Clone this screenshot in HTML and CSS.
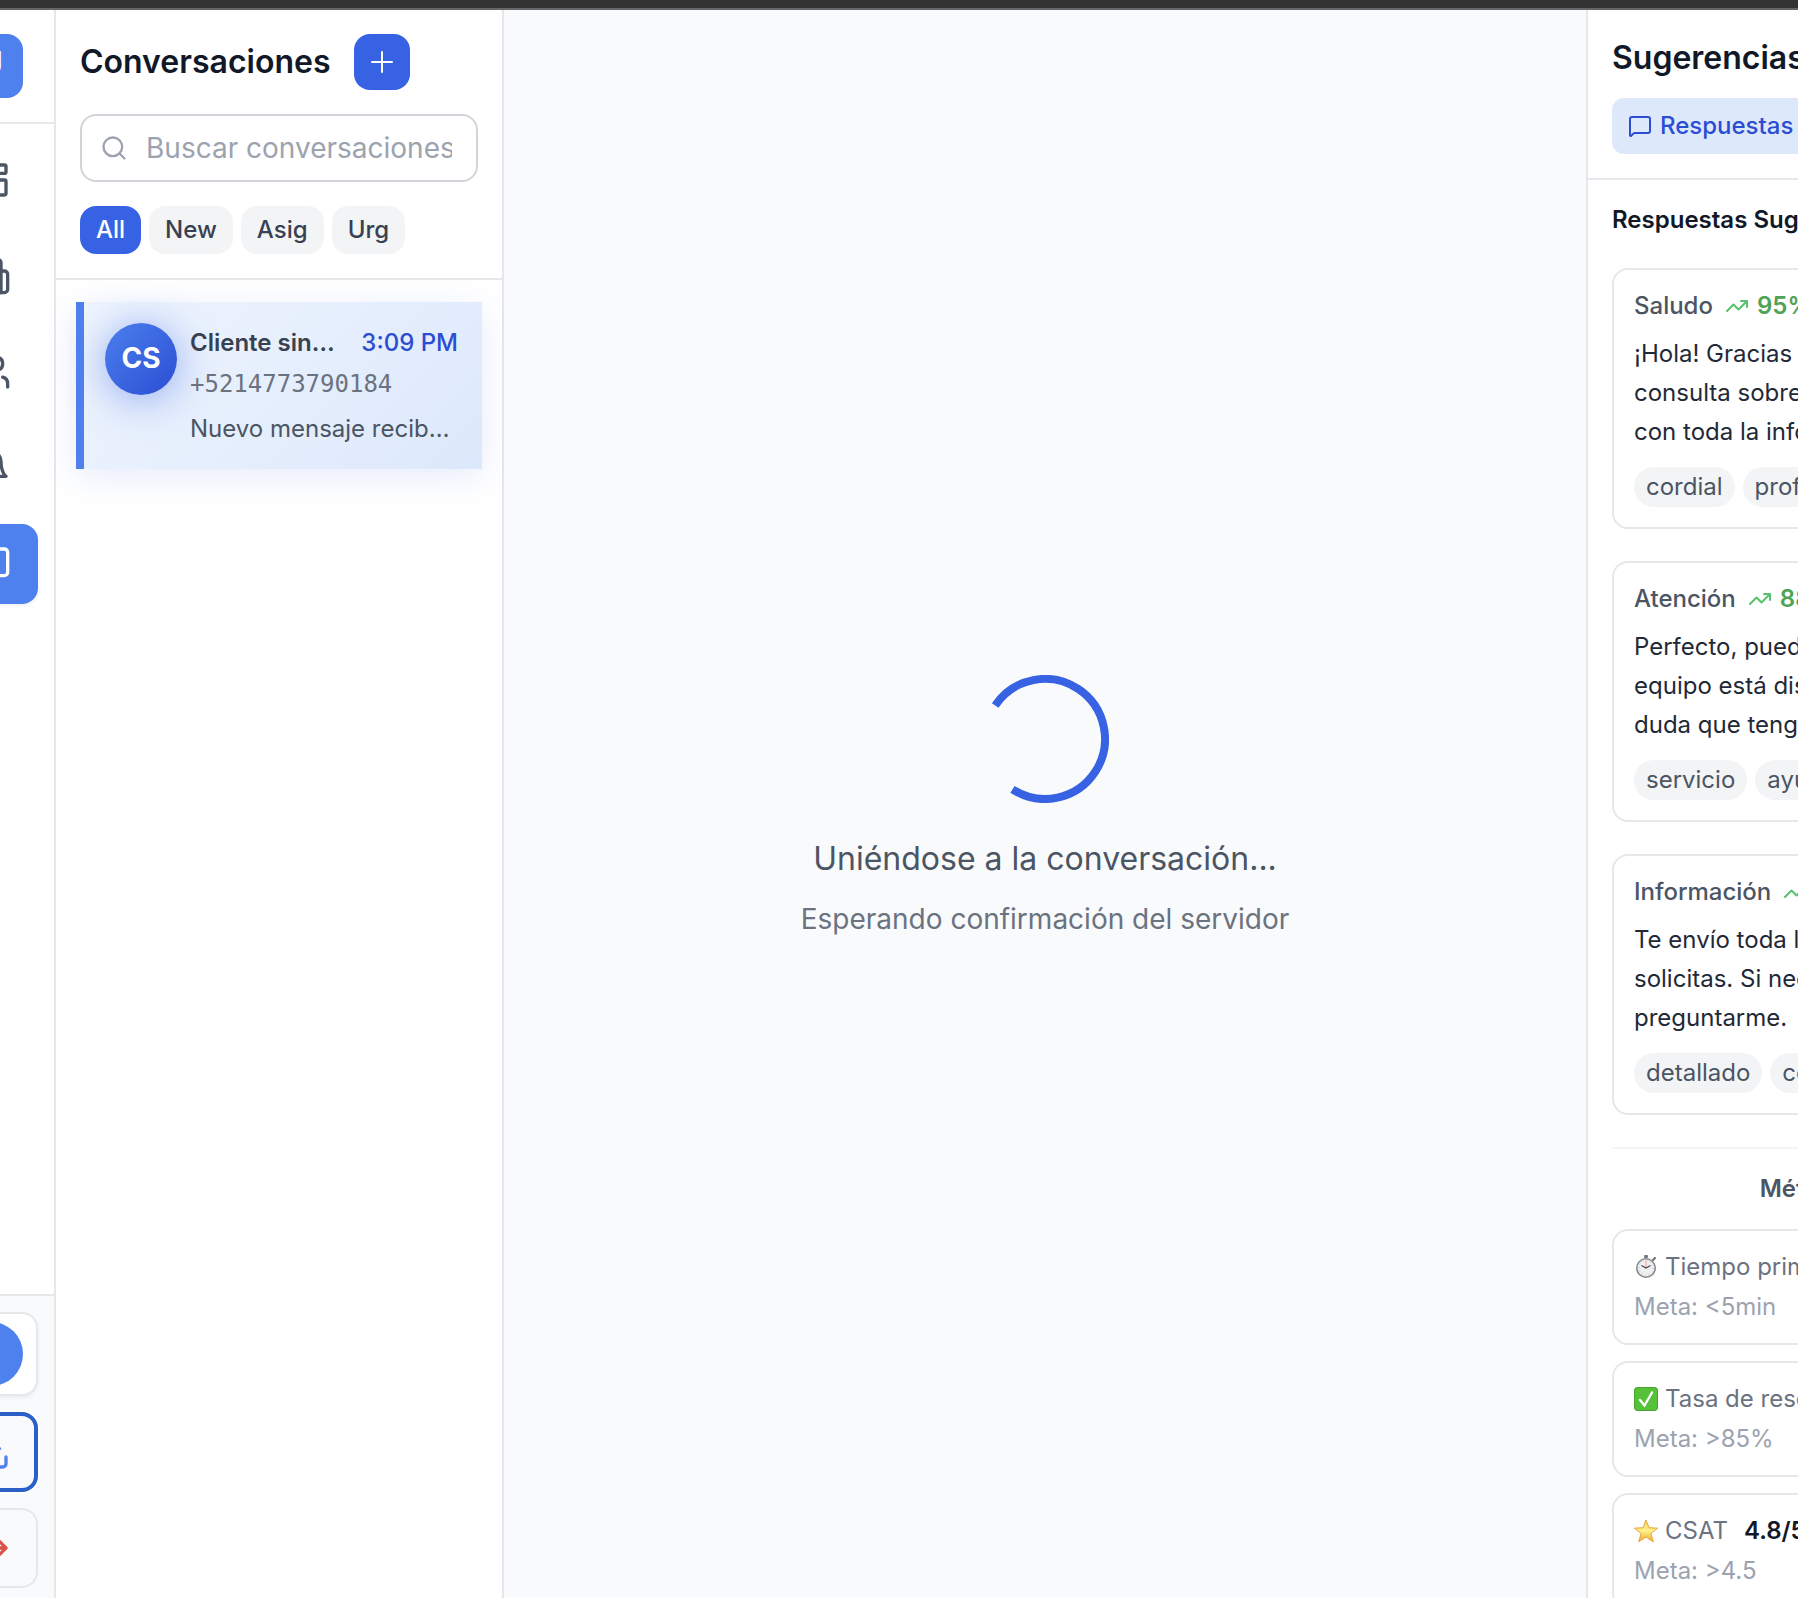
FILE: index.html
```html
<!DOCTYPE html>
<html lang="es">
<head>
<meta charset="utf-8">
<title>Conversaciones</title>
<link rel="stylesheet" href="styles.css">
</head>
<body>
<div class="window-bar"></div>
<div class="shell">
  <aside class="sidebar">
    <div class="brand"><span class="logo">U</span></div>
    <nav class="nav">
      <a class="nav-item" href="#" aria-label="Panel"><svg class="icon icon-lg" viewBox="0 0 24 24"><rect x="3" y="3" width="7" height="9" rx="1"/><rect x="14" y="3" width="7" height="5" rx="1"/><rect x="14" y="12" width="7" height="9" rx="1"/><rect x="3" y="16" width="7" height="5" rx="1"/></svg></a>
      <a class="nav-item" href="#" aria-label="Empresa"><svg class="icon icon-lg" viewBox="0 0 24 24"><path d="M6 22V4a2 2 0 0 1 2-2h8a2 2 0 0 1 2 2v18Z"/><path d="M6 12H4a2 2 0 0 0-2 2v6a2 2 0 0 0 2 2h2"/><path d="M18 9h2a2 2 0 0 1 2 2v9a2 2 0 0 1-2 2h-2"/><path d="M10 6h4M10 10h4M10 14h4M10 18h4"/></svg></a>
      <a class="nav-item" href="#" aria-label="Equipo"><svg class="icon icon-lg" viewBox="0 0 24 24"><path d="M16 21v-2a4 4 0 0 0-4-4H6a4 4 0 0 0-4 4v2"/><circle cx="9" cy="7" r="4"/><path d="M22 21v-2a4 4 0 0 0-3-3.87"/><path d="M16 3.13a4 4 0 0 1 0 7.75"/></svg></a>
      <a class="nav-item" href="#" aria-label="Avisos"><svg class="icon icon-lg" viewBox="0 0 24 24"><path d="M6 8a6 6 0 0 1 12 0c0 7 3 9 3 9H3s3-2 3-9"/><path d="M10.3 21a1.94 1.94 0 0 0 3.4 0"/></svg></a>
      <a class="nav-item nav-item-active" href="#" aria-label="Mensajes"><svg class="icon icon-lg" viewBox="0 0 24 24"><path d="M22 17a2 2 0 0 1-2 2H6.828a2 2 0 0 0-1.414.586l-2.202 2.202A.71.71 0 0 1 2 21.286V5a2 2 0 0 1 2-2h16a2 2 0 0 1 2 2z"/></svg></a>
    </nav>
    <div class="account">
      <div class="profile"><span class="profile-photo"></span></div>
      <button class="action action-install" type="button" aria-label="Instalar"><svg class="icon icon-lg" viewBox="0 0 24 24"><path d="M21 15v4a2 2 0 0 1-2 2H5a2 2 0 0 1-2-2v-4"/><path d="M7 10l5 5 5-5M12 15V3"/></svg></button>
      <button class="action action-exit" type="button" aria-label="Salir"><svg class="icon icon-lg" viewBox="0 0 24 24"><path d="M9 21H5a2 2 0 0 1-2-2V5a2 2 0 0 1 2-2h4"/><path d="M16 17l5-5-5-5M21 12H9"/></svg></button>
    </div>
  </aside>

  <section class="inbox">
    <header class="inbox-head">
      <div class="inbox-title">
        <h2 class="title">Conversaciones</h2>
        <button class="add" type="button" aria-label="Nueva"><svg class="icon icon-md" viewBox="0 0 28 28"><path d="M4 14h20M14 4v20"/></svg></button>
      </div>
      <label class="search">
        <svg class="icon icon-md" viewBox="0 0 24 24"><circle cx="11" cy="11" r="8"/><path d="M21 21l-4.300-4.300"/></svg>
        <input class="search-input" type="text" placeholder="Buscar conversaciones..." aria-label="Buscar conversaciones">
      </label>
      <div class="filters">
        <button class="filter filter-on" type="button">All</button>
        <button class="filter" type="button">New</button>
        <button class="filter" type="button">Asig</button>
        <button class="filter" type="button">Urg</button>
      </div>
    </header>
    <div class="threads">
      <article class="thread">
        <span class="avatar">CS</span>
        <div class="thread-body">
          <div class="thread-top"><h3 class="thread-name">Cliente sin nombre</h3><time class="thread-time">3:09 PM</time></div>
          <p class="thread-phone">+5214773790184</p>
          <p class="thread-last">Nuevo mensaje recibido</p>
        </div>
      </article>
    </div>
  </section>

  <main class="chat">
    <svg class="spinner" viewBox="0 0 128 128"><path d="M14.200 30.500A60 60 0 1 1 31.500 114.400"/></svg>
    <p class="chat-status">Uniéndose a la conversación...</p>
    <p class="chat-hint">Esperando confirmación del servidor</p>
  </main>

  <aside class="assist">
    <header class="assist-head">
      <h2 class="title">Sugerencias</h2>
      <button class="tab" type="button"><svg class="icon icon-sm" viewBox="0 0 24 24"><path d="M22 17a2 2 0 0 1-2 2H6.828a2 2 0 0 0-1.414.586l-2.202 2.202A.71.71 0 0 1 2 21.286V5a2 2 0 0 1 2-2h16a2 2 0 0 1 2 2z"/></svg>Respuestas</button>
    </header>
    <div class="assist-body">
      <h3 class="section-title">Respuestas Sugeridas</h3>
      <article class="card">
        <div class="card-head"><span>Saludo</span><span class="score"><svg class="icon icon-sm" viewBox="0 0 24 24"><path d="M22 7l-8.500 8.500-5-5L2 17M16 7h6v6"/></svg>95%</span></div>
        <p class="card-text">¡Hola! Gracias por<br>consulta sobre<br>con toda la información</p>
        <div class="tags"><span class="tag">cordial</span><span class="tag">profesional</span></div>
      </article>
      <article class="card">
        <div class="card-head"><span>Atención</span><span class="score"><svg class="icon icon-sm" viewBox="0 0 24 24"><path d="M22 7l-8.500 8.500-5-5L2 17M16 7h6v6"/></svg>88%</span></div>
        <p class="card-text">Perfecto, puedo<br>equipo está disponible<br>duda que tengas</p>
        <div class="tags"><span class="tag">servicio</span><span class="tag">ayuda</span></div>
      </article>
      <article class="card">
        <div class="card-head"><span>Información</span><span class="score"><svg class="icon icon-sm" viewBox="0 0 24 24"><path d="M22 7l-8.500 8.500-5-5L2 17M16 7h6v6"/></svg></span></div>
        <p class="card-text">Te envío toda la<br>solicitas. Si necesitas<br>preguntarme.</p>
        <div class="tags"><span class="tag">detallado</span><span class="tag">completo</span></div>
      </article>
      <section class="metrics">
        <h3 class="metrics-title">Métricas del Rendimiento</h3>
        <div class="metric">
          <div class="metric-head">
            <svg class="emoji" viewBox="0 0 24 24"><rect x="10" y="0" width="4" height="3" rx="1" fill="#777b80"/><path d="M19 5l2-2" stroke="#666a70" stroke-width="2" stroke-linecap="round"/><circle cx="12" cy="13" r="9.200" fill="#eef0f1" stroke="#85898e" stroke-width="1.600"/><circle cx="12" cy="13" r="7" fill="none" stroke="#b9bcc0" stroke-width="1" stroke-dasharray="1 2.660"/><path d="M12 13V6" stroke="#efa18a" stroke-width="1"/><path d="M7.500 10.500L12 13l4.500-2.500" fill="none" stroke="#44484d" stroke-width="1.200"/></svg>
            <span>Tiempo primera</span></div>
          <p class="metric-goal">Meta: &lt;5min</p>
        </div>
        <div class="metric">
          <div class="metric-head">
            <svg class="emoji" viewBox="0 0 24 24"><rect width="24" height="24" rx="4" fill="#45a52c"/><rect x="1" y="1" width="22" height="22" rx="3" fill="#56c23a"/><path d="M6 13l4.500 5.500L18 5.500" fill="none" stroke="#fff" stroke-width="2.400" stroke-linecap="round"/></svg>
            <span>Tasa de resolución</span></div>
          <p class="metric-goal">Meta: &gt;85%</p>
        </div>
        <div class="metric">
          <div class="metric-head">
            <svg class="emoji" viewBox="0 0 24 24"><defs><linearGradient id="gold" x1="0" y1="0" x2="0" y2="1"><stop offset="0" stop-color="#f6d35a"/><stop offset=".5" stop-color="#fdf08a"/><stop offset="1" stop-color="#f0a92c"/></linearGradient></defs><path d="M12 1l3 7.700 8.600.5-6.700 5.200 2.400 8.400L12 18l-7.300 4.800 2.400-8.400L.4 9.200 9 8.700z" fill="url(#gold)" stroke="#e5a63a" stroke-width="1" stroke-linejoin="round"/></svg>
            <span>CSAT</span><strong class="metric-value">4.8/5</strong></div>
          <p class="metric-goal">Meta: &gt;4.5</p>
        </div>
      </section>
    </div>
  </aside>
</div>
</body>
</html>
```
FILE: styles.css
```css
* { box-sizing: border-box; margin: 0; }

body {
  height: 100vh;
  overflow: hidden;
  font: 400 24px/32px Inter, "Liberation Sans", sans-serif;
  color: #111827;
  background: #fff;
}

button, input { font: inherit; }
button { border: 0; }

.window-bar {
  height: 10px;
  background: #333;
  border-bottom: 2px solid #666;
}

/* The outer columns run past the window on both sides. */
.shell {
  display: grid;
  grid-template-columns: 128px 448px 1fr 640px;
  height: calc(100vh - 4px);
  margin: 0 -428px 0 -72px;
}

.icon {
  flex: none;
  fill: none;
  stroke: currentColor;
  stroke-width: 2;
  stroke-linecap: round;
  stroke-linejoin: round;
}
.icon-sm { width: 24px; height: 24px; }
.icon-md { width: 28px; height: 28px; }
.icon-lg { width: 40px; height: 40px; }

.title { font-size: 32px; line-height: 48px; font-weight: 600; }

/* Sidebar */
.sidebar {
  display: flex;
  flex-direction: column;
  border-right: 2px solid #e5e7eb;
}
.brand {
  display: flex;
  justify-content: center;
  padding: 24px;
  border-bottom: 2px solid #e5e7eb;
}
.logo {
  width: 64px;
  height: 64px;
  border-radius: 16px;
  background: #4f81ee;
  color: #fff;
  font-size: 32px;
  font-weight: 800;
  line-height: 60px;
  text-align: center;
}
.nav {
  flex: 1;
  display: flex;
  flex-direction: column;
  gap: 16px;
  padding: 16px;
}
.nav-item {
  display: flex;
  align-items: center;
  justify-content: center;
  height: 80px;
  border-radius: 16px;
  color: #4b5563;
}
.nav-item-active {
  background: #4f81ee;
  color: #fff;
  box-shadow: 0 2px 4px rgba(0, 0, 0, .06);
}
.account {
  display: flex;
  flex-direction: column;
  gap: 16px;
  padding: 16px;
  border-top: 2px solid #e5e7eb;
  background: #f9fafc;
}
.profile {
  display: flex;
  justify-content: center;
  padding: 8px;
  border: 2px solid #e5e7eb;
  border-radius: 16px;
  background: #fff;
  box-shadow: 0 2px 4px rgba(0, 0, 0, .06);
}
.profile-photo {
  width: 64px;
  height: 64px;
  border-radius: 50%;
  background: #4f81ee;
}
.action {
  display: flex;
  align-items: center;
  justify-content: center;
  height: 80px;
  padding: 0;
  border-radius: 16px;
  background: #f9fafc;
}
.action-install {
  border: 4px solid #2a60c8;
  color: #4f81ee;
  box-shadow: 0 0 0 2px #fff;
}
.action-exit { border: 2px solid #e5e7eb; color: #dc5148; }

/* Conversation list */
.inbox { border-right: 2px solid #e5e7eb; min-width: 0; }
.inbox-head {
  display: flex;
  flex-direction: column;
  gap: 24px;
  padding: 24px;
  border-bottom: 2px solid #e5e7eb;
}
.inbox-title { display: flex; align-items: center; gap: 24px; }
.add {
  display: flex;
  align-items: center;
  justify-content: center;
  width: 56px;
  height: 56px;
  padding: 0;
  border-radius: 16px;
  background: #3762e3;
  color: #fff;
}
.search {
  display: flex;
  align-items: center;
  gap: 18px;
  padding: 12px 24px 12px 18px;
  border: 2px solid #d1d5db;
  border-radius: 16px;
  color: #9ca3af;
}
.search-input {
  flex: 1;
  min-width: 0;
  height: 40px;
  padding: 0;
  border: 0;
  outline: 0;
  background: none;
  font-size: 28px;
  color: #111827;
}
.search-input::placeholder { color: #9ca3af; }
.filters { display: flex; gap: 8px; }
.filter {
  padding: 8px 16px;
  border-radius: 16px;
  background: #f3f4f6;
  color: #374151;
  font-weight: 500;
}
.filter-on { background: #3762e3; color: #fff; }

.threads { padding: 22px 20px; }
.thread {
  display: flex;
  gap: 13px;
  padding: 21px 24px 16px 21px;
  border-left: 8px solid #4f81ee;
  background: linear-gradient(135deg, #eff5fe, #dce8fb);
  box-shadow: 0 8px 32px rgba(55, 98, 227, .12);
}
.avatar {
  flex: none;
  width: 72px;
  height: 72px;
  border-radius: 50%;
  background: linear-gradient(135deg, #4b80ee, #2b4dd3);
  box-shadow: 0 4px 40px rgba(55, 98, 227, .5);
  color: #fff;
  font-size: 28px;
  font-weight: 700;
  line-height: 70px;
  text-align: center;
}
.thread-body { flex: 1; min-width: 0; padding-top: 4px; }
.thread-top { display: flex; gap: 24px; }
.thread-name {
  flex: 1;
  min-width: 0;
  overflow: hidden;
  font-size: 24px;
  font-weight: 600;
  color: #374151;
  text-overflow: ellipsis;
  white-space: nowrap;
}
.thread-time { font-weight: 500; color: #2b4dd3; }
.thread-phone {
  margin-top: 9px;
  font-family: "DejaVu Sans Mono", monospace;
  color: #6b7280;
}
.thread-last {
  margin-top: 13px;
  padding: 0 8px 8px 0;
  overflow: hidden;
  color: #4b5563;
  text-overflow: ellipsis;
  white-space: nowrap;
}

/* Joining state */
.chat {
  display: flex;
  flex-direction: column;
  align-items: center;
  justify-content: center;
  background: #f9fafc;
}
.spinner {
  width: 128px;
  height: 128px;
  margin-bottom: 32px;
  fill: none;
  stroke: #3762e3;
  stroke-width: 8;
}
.chat-status { font-size: 32px; line-height: 48px; color: #4b5563; }
.chat-hint { margin-top: 16px; font-size: 28px; line-height: 40px; color: #6b7280; }

/* Suggestions */
.assist {
  min-height: 0;
  overflow: hidden;
  border-left: 2px solid #e5e7eb;
}
.assist-head {
  display: flex;
  flex-direction: column;
  gap: 16px;
  padding: 24px;
  border-bottom: 2px solid #e5e7eb;
}
.tab {
  display: flex;
  align-items: center;
  gap: 8px;
  padding: 12px 16px;
  border-radius: 12px;
  background: #dde8fb;
  color: #2b4dd3;
  font-weight: 500;
}
.assist-body {
  display: flex;
  flex-direction: column;
  gap: 32px;
  padding: 24px;
}
.section-title { font-size: 24px; font-weight: 600; }
.card {
  padding: 20px;
  border: 2px solid #e5e7eb;
  border-radius: 16px;
}
.card-head {
  display: flex;
  gap: 12px;
  color: #4b5563;
  font-weight: 500;
}
.score { display: flex; align-items: center; gap: 8px; color: #4ea355; font-weight: 600; }
.score .icon { color: #57c26d; }
.card-text { margin: 12px 0 16px; line-height: 39px; color: #1f2937; }
.tags { display: flex; gap: 8px; }
.tag {
  padding: 4px 12px;
  border-radius: 20px;
  background: #f3f4f6;
  color: #4b5563;
}
.metrics {
  display: flex;
  flex-direction: column;
  gap: 16px;
  padding-top: 24px;
  border-top: 2px solid #f3f4f6;
}
.metrics-title {
  margin-bottom: 8px;
  font-size: 24px;
  font-weight: 600;
  color: #4b5563;
  text-align: center;
}
.metric {
  display: flex;
  flex-direction: column;
  gap: 8px;
  padding: 20px;
  border: 2px solid #e5e7eb;
  border-radius: 16px;
}
.metric-head { display: flex; align-items: center; gap: 7px; color: #6b7280; }
.emoji { flex: none; width: 24px; height: 24px; }
.metric-value { margin-left: 9px; font-weight: 600; color: #111827; }
.metric-goal { color: #9ca3af; }
```
